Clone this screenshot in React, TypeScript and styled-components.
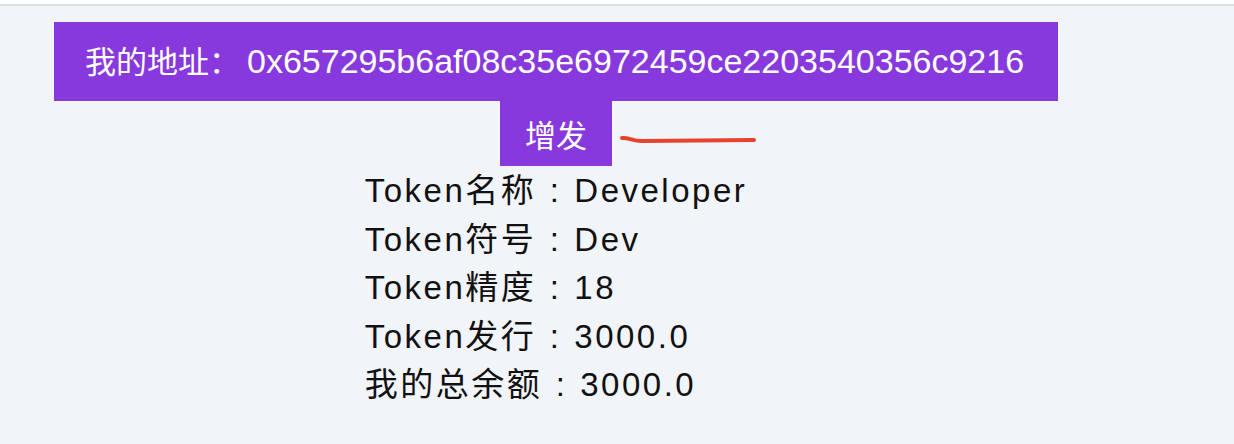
import React from "react";
import styled, { createGlobalStyle } from "styled-components";

const Global = createGlobalStyle`
  html, body { margin: 0; padding: 0; }
  body {
    background: #f1f4f9;
    font-family: "Liberation Sans", "Noto Sans CJK SC", sans-serif;
    border-top: 4px solid #ffffff;
  }
`;

const TopLine = styled.div`
  height: 2px;
  background: #dcdfe3;
`;

const Page = styled.div`
  width: 1112px;
  display: flex;
  flex-direction: column;
  align-items: center;
  padding-top: 16px;
`;

const AddressBar = styled.div`
  width: 1004px;
  height: 79px;
  box-sizing: border-box;
  padding-left: 31px;
  display: flex;
  align-items: center;
  background: #8839dd;
  color: #ffffff;
  white-space: nowrap;
`;

const AddressText = styled.div`
  line-height: 1.2;
`;

const AddressLabel = styled.span`
  font-size: 31px;
  font-family: "Noto Sans CJK SC", sans-serif;
`;

const AddressValue = styled.span`
  font-size: 34px;
  margin-left: 7px;
  font-family: "Liberation Sans", Arial, sans-serif;
`;

const ButtonRow = styled.div`
  position: relative;
  display: flex;
  justify-content: center;
`;

const MintButton = styled.button`
  width: 112px;
  height: 65px;
  border: none;
  margin: 0;
  padding: 0;
  background: #8839dd;
  color: #ffffff;
  font-size: 31px;
  font-family: "Noto Sans CJK SC", sans-serif;
  cursor: pointer;
`;

const Mark = styled.svg`
  position: absolute;
  left: 118px;
  top: 33px;
`;

const InfoList = styled.div`
  display: flex;
  flex-direction: column;
  align-items: flex-start;
  padding-top: 2px;
`;

const InfoLine = styled.div`
  height: 48.5px;
  font-size: 33px;
  line-height: 45.5px;
  letter-spacing: 2.5px;
  color: #111111;
  font-family: "Liberation Sans", "Noto Sans CJK SC", sans-serif;
  white-space: nowrap;
`;

const Colon = styled.span`
  display: inline-block;
  width: 36px;
  text-align: center;
  letter-spacing: 0;
  margin-right: 2px;
  font-family: "Liberation Sans", sans-serif;
`;

const rows: [string, string][] = [
  ["Token名称", "Developer"],
  ["Token符号", "Dev"],
  ["Token精度", "18"],
  ["Token发行", "3000.0"],
  ["我的总余额", "3000.0"],
];

export default function App() {
  return (
    <>
      <Global />
      <TopLine />
      <Page>
        <AddressBar>
          <AddressText>
            <AddressLabel>我的地址：</AddressLabel>
            <AddressValue>0x657295b6af08c35e6972459ce2203540356c9216</AddressValue>
          </AddressText>
        </AddressBar>
        <ButtonRow>
          <MintButton>增发</MintButton>
          <Mark width="140" height="12" viewBox="0 0 140 12">
            <path
              d="M4 4 C10 3 14 7 24 7 L136 6"
              stroke="#e8412c"
              strokeWidth="4"
              strokeLinecap="round"
              fill="none"
            />
          </Mark>
        </ButtonRow>
        <InfoList>
          {rows.map(([label, value]) => (
            <InfoLine key={label}>
              {label}
              <Colon>:</Colon>
              {value}
            </InfoLine>
          ))}
        </InfoList>
      </Page>
    </>
  );
}
